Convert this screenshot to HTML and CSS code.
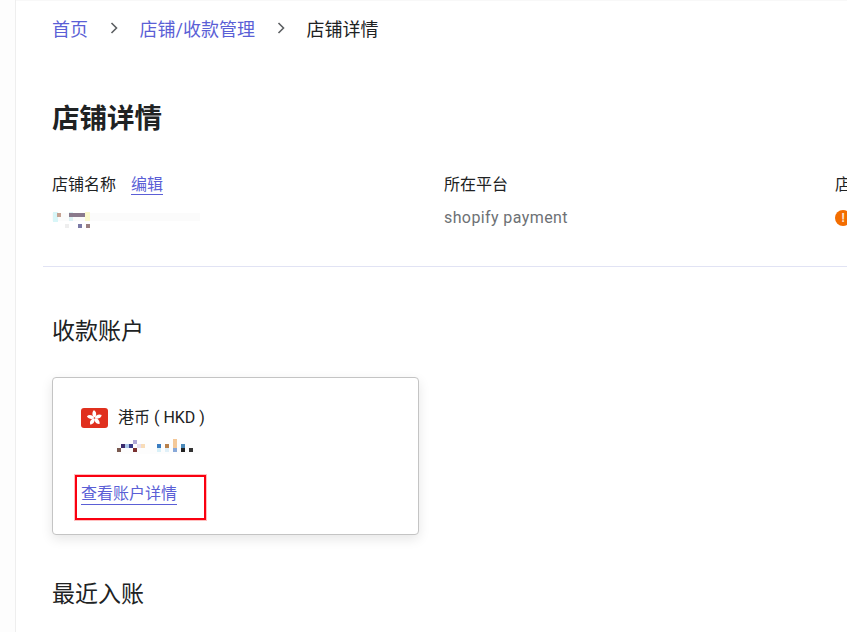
FILE: index.html
```html
<!DOCTYPE html>
<html lang="zh-CN">
<head>
<meta charset="utf-8">
<title>店铺详情</title>
<link rel="stylesheet" href="styles.css">
</head>
<body>
<div class="page">
  <aside class="rail"></aside>
  <main class="main">
    <nav class="crumbs">
      <a class="crumb-link">首页</a>
      <svg class="chev" viewBox="0 0 8 12" width="8" height="12"><path d="M1.5 1 6.500 6l-5 5" fill="none" stroke="#5c5f62" stroke-width="1.600"/></svg>
      <a class="crumb-link">店铺/收款管理</a>
      <svg class="chev" viewBox="0 0 8 12" width="8" height="12"><path d="M1.5 1 6.500 6l-5 5" fill="none" stroke="#5c5f62" stroke-width="1.600"/></svg>
      <span class="crumb-current">店铺详情</span>
    </nav>
    <h1 class="title">店铺详情</h1>
    <section class="info">
      <div class="info-col">
        <div class="info-label">店铺名称<a class="edit">编辑</a></div>
        <svg class="mosaic-name" width="148" height="16" viewBox="0 0 148 16">
          <rect x="0" y="1" width="148" height="8" fill="#fbfbfb"/>
          <rect x="1" y="0" width="5" height="10" fill="#d8f6f8"/>
          <rect x="5" y="1" width="4" height="4" fill="#c5a393"/>
          <rect x="17" y="0" width="4" height="9" fill="#dcf2f4"/>
          <rect x="17" y="1" width="16" height="4" fill="#8a7a8c"/>
          <rect x="33" y="0" width="5" height="9" fill="#fbf9cd"/>
          <rect x="13" y="12" width="4" height="4" fill="#eeeeee"/>
          <rect x="26" y="12" width="4" height="4" fill="#7b7aa6"/>
          <rect x="34" y="12" width="4" height="4" fill="#9a7f80"/>
        </svg>
      </div>
      <div class="info-col">
        <div class="info-label">所在平台</div>
        <div class="info-value">shopify payment</div>
      </div>
      <div class="info-col">
        <div class="info-label">店铺状态</div>
        <div class="status"><span class="status-dot">!</span></div>
      </div>
    </section>
    <hr class="divider">
    <h2 class="section-title">收款账户</h2>
    <div class="card">
      <div class="currency">
        <svg class="flag" width="27" height="20" viewBox="0 0 27 20">
          <rect width="27" height="20" rx="3" fill="#e0301e"/>
          <g fill="#fff" transform="translate(13.500 10) scale(1.250) translate(-13.500 -10)">
            <path d="M13.500 10C11.500 8.500 11.200 5.500 13 3.800 15.200 4.800 15.500 8 13.500 10Z"/>
            <path d="M13.500 10C11.500 8.500 11.200 5.500 13 3.800 15.200 4.800 15.500 8 13.500 10Z" transform="rotate(72 13.500 10)"/>
            <path d="M13.500 10C11.500 8.500 11.200 5.500 13 3.800 15.200 4.800 15.500 8 13.500 10Z" transform="rotate(144 13.500 10)"/>
            <path d="M13.500 10C11.500 8.500 11.200 5.500 13 3.800 15.200 4.800 15.500 8 13.500 10Z" transform="rotate(216 13.500 10)"/>
            <path d="M13.500 10C11.500 8.500 11.200 5.500 13 3.800 15.200 4.800 15.500 8 13.500 10Z" transform="rotate(288 13.500 10)"/>
          </g>
          <circle cx="13.500" cy="10" r="0.800" fill="#e0301e"/>
        </svg>
        <span class="currency-name">港币 ( HKD )</span>
      </div>
      <svg class="mosaic-acct" width="84" height="16" viewBox="0 0 84 16">
        <rect x="0" y="1" width="84" height="14" fill="#fdfdfd"/>
        <rect x="5" y="5" width="4" height="4" fill="#3b2a6b"/>
        <rect x="1" y="9" width="4" height="4" fill="#7a5a50"/>
        <rect x="9" y="5" width="4" height="4" fill="#a9c4e8"/>
        <rect x="13" y="5" width="4" height="4" fill="#3a3a8a"/>
        <rect x="17" y="1" width="4" height="4" fill="#b0a8d8"/>
        <rect x="17" y="9" width="4" height="4" fill="#7a3030"/>
        <rect x="21" y="5" width="4" height="4" fill="#e8e0f0"/>
        <rect x="25" y="5" width="4" height="4" fill="#f8dcb8"/>
        <rect x="41" y="5" width="4" height="4" fill="#3a7cc0"/>
        <rect x="41" y="9" width="4" height="4" fill="#d8f0f8"/>
        <rect x="49" y="5" width="4" height="4" fill="#b8804a"/>
        <rect x="49" y="9" width="4" height="4" fill="#e0f0f8"/>
        <rect x="57" y="0" width="4" height="9" fill="#f4c898"/>
        <rect x="57" y="9" width="4" height="4" fill="#88a8d8"/>
        <rect x="65" y="5" width="4" height="4" fill="#4a88b8"/>
        <rect x="65" y="9" width="4" height="4" fill="#222222"/>
        <rect x="73" y="9" width="4" height="4" fill="#333333"/>
      </svg>
      <a class="detail-link">查看账户详情</a>
      <div class="annotation"></div>
    </div>
    <h2 class="section-title recent">最近入账</h2>
  </main>
</div>
</body>
</html>
```
FILE: styles.css
```css
* { box-sizing: border-box; }
html, body { margin: 0; height: 100%; overflow: hidden; background: #fff; }
body {
  font-family: Roboto, "Noto Sans CJK SC", sans-serif;
  color: #202223;
}
.page { display: flex; width: 847px; height: 632px; overflow: hidden; }
.rail { flex: 0 0 16px; border-right: 1px solid #eeeeee; background: #fdfdfd; }
.main {
  flex: 1;
  min-width: 0;
  padding: 0 0 0 36px;
  border-top: 1px solid #f8f8f8;
}
.crumbs {
  display: flex;
  align-items: center;
  height: 53px;
  font-size: 18px;
}
.crumb-link { color: #5b5fd6; }
.crumb-current { color: #202223; }
.chev { margin: 0 21.500px 0 22px; flex: none; }
.title {
  margin: 31px 0 0;
  font-size: 27.500px;
  line-height: 68px;
  height: 68px;
  font-weight: 700;
  color: #202223;
}
.info {
  display: grid;
  grid-template-columns: 392px 391px 391px;
  margin-top: 20px;
  width: 1174px;
}
.info-label { font-size: 16px; line-height: 24px; color: #202223; }
.edit {
  margin-left: 15px;
  color: #5b5fd6;
  border-bottom: 1px solid #5b5fd6;
}
.info-value {
  margin-top: 9px;
  font-size: 16px;
  line-height: 24px;
  letter-spacing: 0.400px;
  color: #6d7175;
}
.mosaic-name { display: block; margin-top: 15px; }
.status { margin-top: 9px; height: 24px; display: flex; align-items: center; }
.status-dot {
  width: 16px;
  height: 16px;
  border-radius: 50%;
  background: #f36d00;
  color: #fbe6d6;
  font-size: 12px;
  font-weight: 700;
  line-height: 16px;
  text-align: center;
}
.divider {
  margin: 36px 0 0 -9px;
  border: 0;
  border-top: 1px solid #e1e3f4;
  height: 0;
}
.section-title {
  margin: 46px 0 0;
  font-size: 23px;
  line-height: 38px;
  font-weight: 400;
  color: #202223;
}
.card {
  position: relative;
  width: 367px;
  height: 158px;
  margin-top: 26px;
  padding: 30px 28px 0;
  background: #fff;
  border: 1px solid #c4c4c4;
  border-radius: 4px;
  box-shadow: 0 4px 12px rgba(0, 0, 0, 0.100);
}
.currency { display: flex; align-items: center; height: 20px; }
.flag { flex: none; }
.currency-name { margin: 0 0 4px 10px; font-size: 16px; color: #202223; }
.mosaic-acct { display: block; margin: 11px 0 0 35px; }
.detail-link {
  display: inline-block;
  margin-top: 28px;
  font-size: 16px;
  line-height: 21px;
  color: #5b5fd6;
  border-bottom: 1px solid #5b5fd6;
}
.annotation {
  position: absolute;
  left: 22px;
  top: 97px;
  width: 131px;
  height: 45px;
  border: 2px solid #fa0010;
  box-shadow: 0 0 0 1px rgba(255, 0, 0, 0.250);
}
.recent { margin-top: 41px; }
```
